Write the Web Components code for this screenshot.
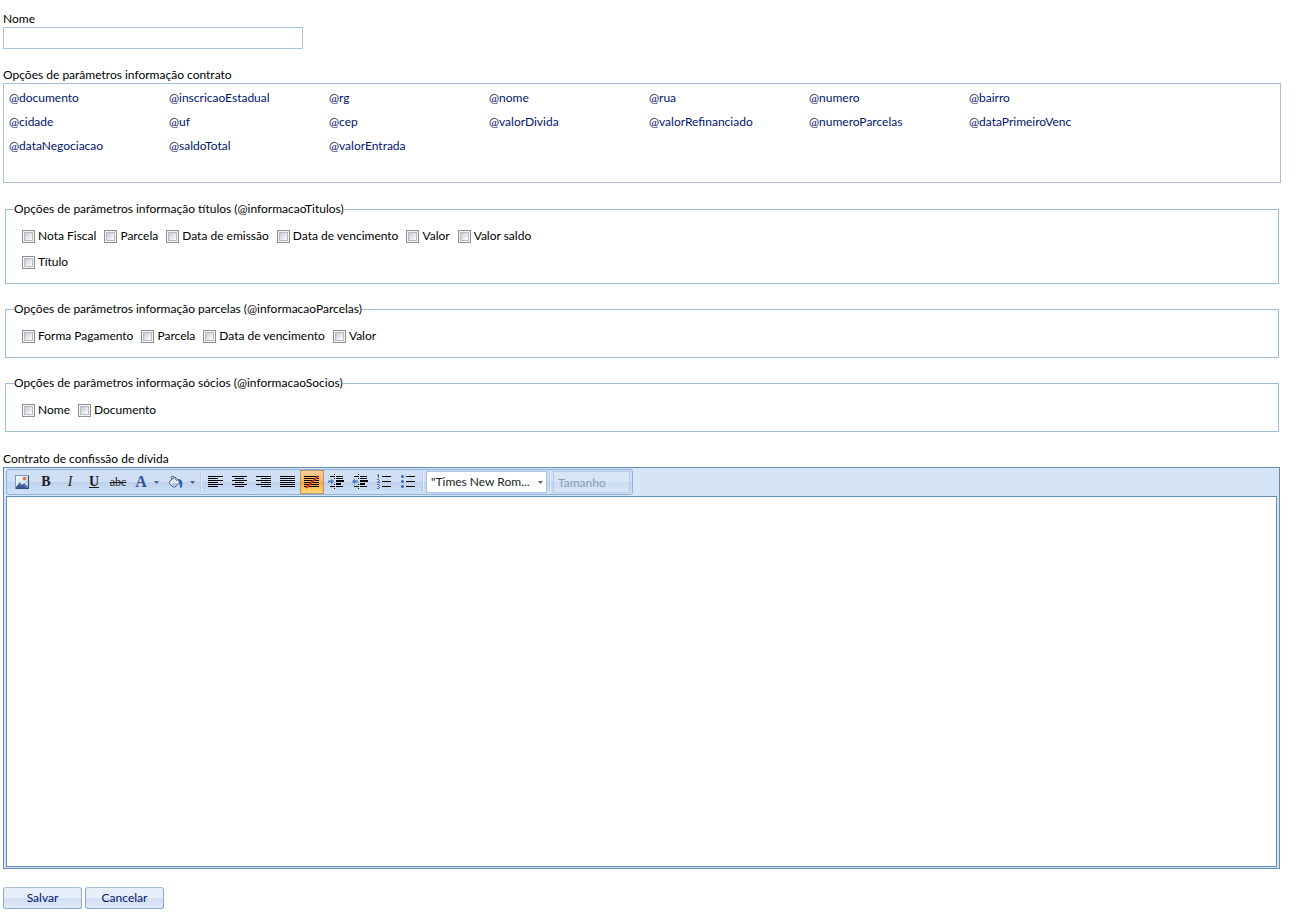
<!DOCTYPE html>
<html lang="pt-BR">
<head>
<meta charset="utf-8">
<title>Contrato de confissão de dívida</title>
<style>
  body { margin: 0; background: #fff; color: #000; font: 12px/16px Lato, "Open Sans", sans-serif; }
</style>
</head>
<body>
<contract-page></contract-page>

<script>
const define = (name, build) => customElements.define(name, class extends HTMLElement {
  connectedCallback() {
    if (this.shadowRoot) return;
    this.attachShadow({ mode: 'open' }).innerHTML = build(this);
  }
});

define('text-field', el => `
  <style>
    :host { display: block; }
    label { display: block; }
    input { display: block; box-sizing: border-box; width: 300px; max-width: 100%; height: 22px; margin: 0;
      padding: 0 4px; border: 1px solid #abc1de; background: #fff; font: inherit; outline: 0; }
  </style>
  <label for="f">${el.getAttribute('label')}</label>
  <input id="f" type="text">`);

define('param-list', el => `
  <style>
    :host { display: block; }
    ul { display: grid; grid-template-columns: repeat(auto-fill, 160px); grid-auto-rows: 24px; align-content: start;
      box-sizing: border-box; min-height: 100px; margin: 0; padding: 2px 5px; border: 1px solid #a9bfd9; list-style: none; }
    li { line-height: 24px; }
    a { color: #00156e; text-decoration: none; }
  </style>
  <div>${el.getAttribute('label')}</div>
  <ul>${el.getAttribute('items').split(' ').map(t => `<li><a href="#">@${t}</a></li>`).join('')}</ul>`);

define('check-group', el => `
  <style>
    :host { display: block; }
    fieldset { min-width: 0; margin: 0 2px; padding: 6px 8px 8px; border: 1px solid #9ebdd9; }
    legend { padding: 0; }
  </style>
  <fieldset><legend>${el.getAttribute('legend')}</legend><slot></slot></fieldset>`);

define('check-row', () => `
  <style>:host { display: flex; flex-wrap: wrap; gap: 0 8px; padding: 0 8px; }</style>
  <slot></slot>`);

define('check-item', () => `
  <style>
    :host { display: block; }
    label { display: flex; align-items: center; gap: 3px; height: 26px; white-space: nowrap; }
    input { appearance: none; flex: none; box-sizing: border-box; width: 13px; height: 13px; margin: 0;
      border: 1px solid #8e8f8f; background: linear-gradient(135deg, #c3c8d3, #f6f6f6 80%) content-box, #f4f4f4;
      padding: 2px; box-shadow: inset 0 0 0 1px #f4f4f4, inset 0 0 0 2px #b6bbc6; }
  </style>
  <label><input type="checkbox"><span><slot></slot></span></label>`);

define('push-button', () => `
  <style>
    :host { display: block; }
    button { display: block; width: 79px; height: 22px; margin: 0; padding: 0; border: 1px solid #8ba6cd; border-top-color: #a9bfde;
      border-radius: 3px; background: linear-gradient(#e6effc 0 50%, #d0def4 50%, #e1ebfa); color: #00156e; font: inherit; }
  </style>
  <button type="button"><slot></slot></button>`);

/* Toolbar button glyphs, drawn on a 16px grid. */
const bars = (rows, fill = '#000') => rows.map(([x, y, w, h = 1]) => `<rect x="${x}" y="${y}" width="${w}" height="${h}" fill="${fill}"/>`).join('');
const lines = (widths, place) => bars(widths.map((w, i) => [place(w), 2 + i * 2, w]));
const ARROW = '<path d="M0 4h5L2.5 7z" fill="#4a6389"/>';
const INDENT = bars([[2, 2, 4], [8, 2, 7], [8, 4, 7], [8, 6, 8, 2], [8, 9, 5, 2], [2, 12, 4], [8, 12, 7], [6, 0, 1], [6, 2, 1], [6, 4, 1], [6, 10, 1], [6, 12, 1], [6, 14, 1]]);
const ICONS = {
  image: `<defs><linearGradient id="s" x2="1" y2="1"><stop stop-color="#fff"/><stop offset="1" stop-color="#a9c9ef"/></linearGradient></defs>
    <rect x="1.500" y="1.500" width="13" height="13" fill="url(#s)" stroke="#7d9cc8"/><path d="M14.500 2v12.500H2" fill="none" stroke="#24477c"/>
    <path d="M2 12l4-5 2 3 2-2 4 4v2H2z" fill="#5f7fb5"/><path d="M2 12l4-5 2 3M8 11l2-3 4 4" fill="none" stroke="#fff"/>
    <path d="M2 14l3-4 2 2 2-2 3 4z" fill="#39598f"/><circle cx="10.500" cy="4.500" r="1.800" fill="#e8743b"/>`,
  bucket: `<path d="M3 7l5-4 5 5-5 5H6L2 9z" fill="#e6eef8" stroke="#4c6795"/><path d="M5 6L4 3l2-1 4 5" fill="none" stroke="#4c6795"/>
    <path d="M11 5c4 0 5 3 4 8l-2 1c0-3 0-4-1-5z" fill="#2f62b5"/><path d="M4 10l7-1-4 4z" fill="#a8bddb"/>`,
  left: lines([15, 10, 15, 10, 15, 10], () => 0),
  center: lines([15, 9, 15, 9, 15, 9], w => w < 15 ? 3 : 0),
  right: lines([15, 10, 15, 10, 15, 10], w => 15 - w),
  full: lines([15, 15, 15, 15, 15, 15], () => 0),
  none: lines([15, 15, 15, 15, 15, 15], () => 0) + '<path d="M2 14L14 2" stroke="#e02a18" stroke-width="2"/>',
  indent: INDENT + '<path d="M6 7.500L3 4.500v2H0v2h3v2z" fill="#4d79c7"/>',
  outdent: INDENT + '<path d="M0 7.500l3-3v2h3v2H3v2z" fill="#4d79c7"/>',
  numbers: bars([[6, 2, 9], [6, 7, 9], [6, 12, 9]]) + bars([[1, 1, 1], [2, 0, 1, 4], [1, 5, 2], [3, 6, 1], [2, 7, 1], [1, 8, 3], [1, 10, 2], [3, 11, 1], [2, 12, 1], [3, 13, 1], [1, 14, 2]], '#3c68b4'),
  bullets: bars([[6, 2, 9], [6, 7, 9], [6, 12, 9]]) + '<g fill="#3c68b4"><circle cx="2.500" cy="2.500" r="1.500"/><circle cx="2.500" cy="7.500" r="1.500"/><circle cx="2.500" cy="12.500" r="1.500"/></g>'
};

define('tool-button', el => {
  const icon = el.getAttribute('icon');
  return `
  <style>
    :host { display: block; }
    button { display: flex; align-items: center; justify-content: center; box-sizing: border-box; width: 24px; height: 24px;
      margin: 0; padding: 0; border: 0; background: none; color: #1c1c1c; font: 700 14px/16px "Liberation Serif", serif; }
    :host([menu]) button { width: 34px; gap: 7px; color: #33528f; font-size: 16px; }
    :host([pressed]) button { border: 0; box-shadow: inset 0 0 0 1px #b9955f;
      background: linear-gradient(#f9cf98, #fcb765 50%, #fba344 50%, #fee27a); }
    svg { display: block; flex: none; }
    :host([look=italic]) button { font-style: italic; font-weight: 400; }
    :host([look=underline]) button { text-decoration: underline; }
    :host([look=strike]) button { text-decoration: line-through; font-size: 12px; font-weight: 400; }
  </style>
  <button type="button" title="${el.getAttribute('hint')}">${icon ? `<svg width="16" height="16" viewBox="0 0 16 16">${ICONS[icon]}</svg>` : '<slot></slot>'}${el.hasAttribute('menu') ? `<svg width="5" height="10">${ARROW}</svg>` : ''}</button>`;
});

define('tool-gap', () => `
  <style>:host { display: block; width: 1px; height: 18px; margin: 0 2px; background: #b4cae8; border-right: 1px solid #e4eefa; }</style>`);

define('font-select', () => `
  <style>
    :host { display: grid; width: 121px; height: 22px; align-items: center; }
    select, svg { grid-area: 1 / 1; }
    select { appearance: none; box-sizing: border-box; width: 100%; height: 22px; margin: 0; padding: 0 12px 0 4px;
      border: 1px solid #a9c2e4; border-radius: 0; background: #fff; color: #222; font: inherit; }
    svg { justify-self: end; margin-right: 4px; pointer-events: none; }
  </style>
  <select aria-label="Fonte"><option>"Times New Rom...</option></select>
  <svg width="5" height="10">${ARROW}</svg>`);

define('size-box', () => `
  <style>
    :host { display: block; }
    input { display: block; box-sizing: border-box; width: 77px; height: 22px; margin: 0; padding: 0 4px;
      border: 1px solid #b5cbe8; background: linear-gradient(#d8e5f5 50%, #cbdcf1 50%, #d8e7f8); font: inherit; }
    input::placeholder { color: #8b9cb4; opacity: 1; }
  </style>
  <input type="text" placeholder="Tamanho" aria-label="Tamanho" disabled>`);

define('rich-editor', el => `
  <style>
    :host { display: block; margin-right: 1px; }
    .frame { box-sizing: border-box; padding: 1px 2px; border: 1px solid #688caf; background: #d5e5f5; }
    .bar { display: flex; align-items: center; box-sizing: border-box; width: max-content; height: 26px; margin-bottom: 1px; padding: 0 2px 0 3px;
      border: 1px solid #8fb1de; border-radius: 3px; background: linear-gradient(#d0dff4 50%, #bdd1ec 50%, #d0e2f8); }
    textarea { display: block; box-sizing: border-box; width: 100%; height: 371px; margin: 0; padding: 4px;
      border: 1px solid #6289b8; background: #fff; font: 16px/20px "Liberation Serif", serif; resize: none; outline: 0; }
  </style>
  <label for="t">${el.getAttribute('label')}</label>
  <div class="frame">
    <div class="bar" role="toolbar">
      <tool-button icon="image" hint="Imagem"></tool-button>
      <tool-button hint="Negrito">B</tool-button>
      <tool-button look="italic" hint="Itálico">I</tool-button>
      <tool-button look="underline" hint="Sublinhado">U</tool-button>
      <tool-button look="strike" hint="Tachado">abc</tool-button>
      <tool-button menu hint="Cor do texto">A</tool-button>
      <tool-button menu icon="bucket" hint="Cor de fundo"></tool-button>
      <tool-gap></tool-gap>
      <tool-button icon="left" hint="Alinhar à esquerda"></tool-button>
      <tool-button icon="center" hint="Centralizar"></tool-button>
      <tool-button icon="right" hint="Alinhar à direita"></tool-button>
      <tool-button icon="full" hint="Justificar"></tool-button>
      <tool-button icon="none" pressed hint="Sem alinhamento"></tool-button>
      <tool-button icon="indent" hint="Aumentar recuo"></tool-button>
      <tool-button icon="outdent" hint="Diminuir recuo"></tool-button>
      <tool-button icon="numbers" hint="Numeração"></tool-button>
      <tool-button icon="bullets" hint="Marcadores"></tool-button>
      <tool-gap></tool-gap>
      <font-select></font-select>
      <tool-gap></tool-gap>
      <size-box></size-box>
    </div>
    <textarea id="t"></textarea>
  </div>`);

define('contract-page', () => `
  <style>
    :host { display: block; padding: 11px 20px 8px 3px; }
    form { display: flex; flex-direction: column; gap: 18px; margin: 0; }
    .groups { display: grid; gap: 17px; padding-bottom: 1px; }
    .actions { display: flex; gap: 3px; }
  </style>
  <form>
    <text-field label="Nome"></text-field>
    <param-list label="Opções de parâmetros informação contrato"
      items="documento inscricaoEstadual rg nome rua numero bairro cidade uf cep valorDivida valorRefinanciado numeroParcelas dataPrimeiroVenc dataNegociacao saldoTotal valorEntrada"></param-list>
    <div class="groups">
      <check-group legend="Opções de parâmetros informação títulos (@informacaoTitulos)">
        <check-row>
          <check-item>Nota Fiscal</check-item><check-item>Parcela</check-item><check-item>Data de emissão</check-item>
          <check-item>Data de vencimento</check-item><check-item>Valor</check-item><check-item>Valor saldo</check-item>
        </check-row>
        <check-row><check-item>Título</check-item></check-row>
      </check-group>
      <check-group legend="Opções de parâmetros informação parcelas (@informacaoParcelas)">
        <check-row>
          <check-item>Forma Pagamento</check-item><check-item>Parcela</check-item>
          <check-item>Data de vencimento</check-item><check-item>Valor</check-item>
        </check-row>
      </check-group>
      <check-group legend="Opções de parâmetros informação sócios (@informacaoSocios)">
        <check-row><check-item>Nome</check-item><check-item>Documento</check-item></check-row>
      </check-group>
    </div>
    <rich-editor label="Contrato de confissão de dívida"></rich-editor>
    <div class="actions"><push-button>Salvar</push-button><push-button>Cancelar</push-button></div>
  </form>`);
</script>
</body>
</html>
